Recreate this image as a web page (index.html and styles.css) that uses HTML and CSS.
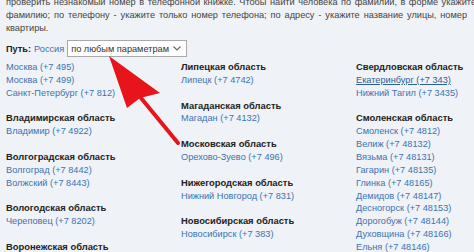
FILE: index.html
```html
<!DOCTYPE html>
<html lang="ru">
<head>
<meta charset="utf-8">
<title>Телефонная книга</title>
<link rel="stylesheet" href="styles.css">
</head>
<body>
<div class="page">
  <div class="intro">
    <span class="line l1">проверить незнакомый номер в телефонной книжке. Чтобы найти человека по фамилии, в форме укажите</span>
    <span class="line l2">фамилию; по телефону - укажите только номер телефона; по адресу - укажите название улицы, номер</span>
    <span class="line l3">квартиры.</span>
  </div>
  <div class="path">
    <b class="path-label">Путь:</b>
    <a class="link" href="#">Россия</a>
    <div class="select">
      <span class="select-text">по любым параметрам</span>
      <svg class="chev" width="8" height="5" viewBox="0 0 8 5"><polyline points="0.5,0.5 4,4 7.5,0.5" fill="none" stroke="#666" stroke-width="1.1"/></svg>
    </div>
  </div>
  <div class="columns">
    <div class="col">
      <div class="group">
        <a class="link" href="#">Москва (+7 495)</a>
        <a class="link" href="#">Москва (+7 499)</a>
        <a class="link" href="#">Санкт-Петербург (+7 812)</a>
      </div>
      <div class="group">
        <div class="region">Владимирская область</div>
        <a class="link" href="#">Владимир (+7 4922)</a>
      </div>
      <div class="group">
        <div class="region">Волгоградская область</div>
        <a class="link" href="#">Волгоград (+7 8442)</a>
        <a class="link" href="#">Волжский (+7 8443)</a>
      </div>
      <div class="group">
        <div class="region">Вологодская область</div>
        <a class="link" href="#">Череповец (+7 8202)</a>
      </div>
      <div class="group">
        <div class="region">Воронежская область</div>
      </div>
    </div>
    <div class="col">
      <div class="group">
        <div class="region">Липецкая область</div>
        <a class="link" href="#">Липецк (+7 4742)</a>
      </div>
      <div class="group">
        <div class="region">Магаданская область</div>
        <a class="link" href="#">Магадан (+7 4132)</a>
      </div>
      <div class="group">
        <div class="region">Московская область</div>
        <a class="link" href="#">Орехово-Зуево (+7 496)</a>
      </div>
      <div class="group">
        <div class="region">Нижегородская область</div>
        <a class="link" href="#">Нижний Новгород (+7 831)</a>
      </div>
      <div class="group">
        <div class="region">Новосибирская область</div>
        <a class="link" href="#">Новосибирск (+7 383)</a>
      </div>
    </div>
    <div class="col">
      <div class="group">
        <div class="region">Свердловская область</div>
        <a class="link hover" href="#">Екатеринбург (+7 343)</a>
        <a class="link" href="#">Нижний Тагил (+7 3435)</a>
      </div>
      <div class="group">
        <div class="region">Смоленская область</div>
        <a class="link" href="#">Смоленск (+7 4812)</a>
        <a class="link" href="#">Велиж (+7 48132)</a>
        <a class="link" href="#">Вязьма (+7 48131)</a>
        <a class="link" href="#">Гагарин (+7 48135)</a>
        <a class="link" href="#">Глинка (+7 48165)</a>
        <a class="link" href="#">Демидов (+7 48147)</a>
        <a class="link" href="#">Десногорск (+7 48153)</a>
        <a class="link" href="#">Дорогобуж (+7 48144)</a>
        <a class="link" href="#">Духовщина (+7 48166)</a>
        <a class="link" href="#">Ельня (+7 48146)</a>
      </div>
    </div>
  </div>
  <svg class="arrow" width="474" height="252" viewBox="0 0 474 252">
    <line x1="141" y1="98" x2="178" y2="143" stroke="#e8141c" stroke-width="4" stroke-linecap="round"/>
    <polygon points="109,56 127,108 140,98 160,93" fill="#e8141c"/>
  </svg>
</div>
</body>
</html>
```
FILE: styles.css
```css
html, body {
  margin: 0;
  padding: 0;
}
body {
  background: #eff2f6;
  font-family: "Liberation Sans", Arial, sans-serif;
  font-size: 9.2px;
  color: #333;
  overflow: hidden;
  width: 474px;
  height: 252px;
}
.page {
  position: relative;
  height: 252px;
  overflow: hidden;
}
.intro {
  margin-top: -4px;
  padding: 0 6px;
  line-height: 13px;
  color: #444;
}
.line {
  display: block;
  text-align: justify;
  text-align-last: justify;
}
.l1 {
  width: 470px;
  height: 13px;
  overflow: hidden;
}
.l2 {
  width: 461px;
  height: 13px;
  overflow: hidden;
}
.l3 {
  text-align-last: left;
}
.path {
  display: flex;
  align-items: center;
  gap: 3px;
  margin-top: 5px;
  padding-left: 6px;
  height: 17px;
}
.path-label {
  color: #222;
}
.link {
  color: #3c72b2;
  text-decoration: none;
}
.select {
  flex: none;
  display: flex;
  align-items: center;
  justify-content: space-between;
  box-sizing: border-box;
  width: 120px;
  height: 17px;
  padding: 0 5px 0 3px;
  background: #fff;
  border: 1px solid #a9a9a9;
  color: #333;
}
.select-text {
  white-space: nowrap;
}
.chev {
  display: block;
}
.columns {
  display: grid;
  grid-template-columns: 175px 175px 118px;
  margin-top: 4px;
  padding-left: 6px;
  line-height: 12.86px;
}
.col {
  display: flex;
  flex-direction: column;
}
.group {
  display: flex;
  flex-direction: column;
  margin-bottom: 12.86px;
}
.region {
  font-weight: bold;
  font-size: 9.4px;
  color: #222;
  white-space: nowrap;
}
.group .link {
  display: block;
  white-space: nowrap;
}
.link.hover {
  color: #2c5f98;
  text-decoration: underline;
}
.arrow {
  position: absolute;
  left: 0;
  top: 0;
  pointer-events: none;
}
```
